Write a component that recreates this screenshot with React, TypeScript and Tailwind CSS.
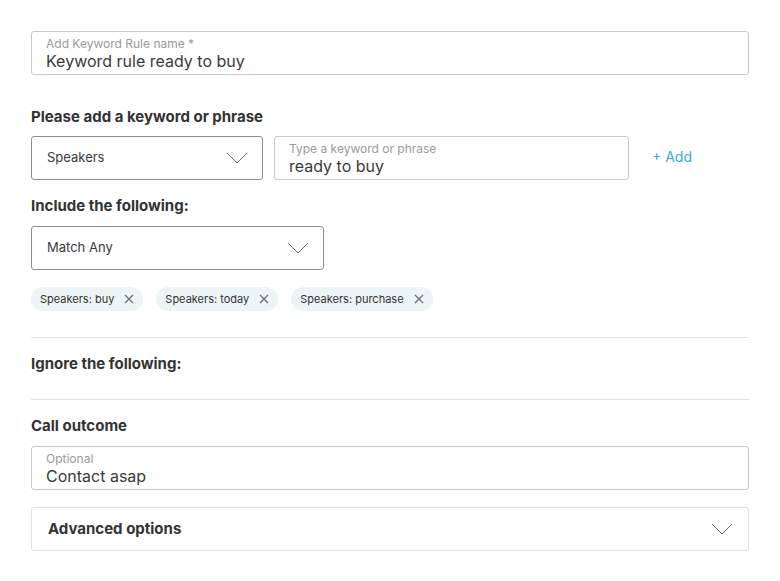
import React from "react";

const Chevron = ({ className = "" }: { className?: string }) => (
  <svg width="22" height="12" viewBox="0 0 22 12" className={className} fill="none">
    <path d="M1 1 L11 11 L21 1" stroke="#6b6b6b" strokeWidth="1" />
  </svg>
);

const XIcon = () => (
  <svg width="10" height="10" viewBox="0 0 10 10" fill="none">
    <path d="M1 1 L9 9 M9 1 L1 9" stroke="#6f6f6f" strokeWidth="1.3" />
  </svg>
);

const Field = ({ label, value, className = "" }: { label: string; value: string; className?: string }) => (
  <div className={`h-[44px] border border-[#c9c9c9] rounded-[3px] px-[14px] pt-[5px] flex flex-col ${className}`}>
    <span className="text-[12px] leading-[14px] text-[#9a9a9a]">{label}</span>
    <span className="text-[16px] leading-[20px] text-[#3a3a3a]">{value}</span>
  </div>
);

const Select = ({ value, className = "" }: { value: string; className?: string }) => (
  <div className={`h-[44px] border border-[#8e8e8e] rounded-[3px] pl-[15px] pr-[14px] flex items-center justify-between ${className}`}>
    <span className="text-[13px] text-[#3a3a3a]">{value}</span>
    <Chevron />
  </div>
);

const Chip = ({ text }: { text: string }) => (
  <div className="h-[24px] rounded-full bg-[#edf4f6] pl-[9px] pr-[9px] flex items-center gap-[10px]">
    <span className="text-[11px] text-[#333]">{text}</span>
    <XIcon />
  </div>
);

export default function App() {
  return (
    <div className="w-[780px] h-[581px] bg-white px-[31px] pt-[31px] text-[#333]" style={{ fontFamily: "Inter, 'Noto Sans', sans-serif" }}>
      <Field label="Add Keyword Rule name *" value="Keyword rule ready to buy" />
      <h3 className="mt-[32px] text-[15px] font-bold leading-[20px] text-[#333]">Please add a keyword or phrase</h3>
      <div className="mt-[9px] flex items-center">
        <Select value="Speakers" className="w-[232px]" />
        <Field label="Type a keyword or phrase" value="ready to buy" className="w-[355px] ml-[11px]" />
        <span className="ml-[23px] text-[14px] text-[#3aa9e1] -mt-[4px]">+ Add</span>
      </div>
      <h3 className="mt-[16px] text-[15px] font-bold leading-[20px]">Include the following:</h3>
      <Select value="Match Any" className="mt-[10px] w-[293px]" />
      <div className="mt-[17px] flex gap-[13px]">
        <Chip text="Speakers: buy" />
        <Chip text="Speakers: today" />
        <Chip text="Speakers: purchase" />
      </div>
      <div className="mt-[26px] border-t border-[#e3e3e3]" />
      <h3 className="mt-[16px] text-[15px] font-bold leading-[20px]">Ignore the following:</h3>
      <div className="mt-[25px] border-t border-[#e3e3e3]" />
      <h3 className="mt-[16px] text-[15px] font-bold leading-[20px]">Call outcome</h3>
      <Field label="Optional" value="Contact asap" className="mt-[10px]" />
      <div className="mt-[17px] h-[44px] border border-[#e0e0e0] rounded-[3px] pl-[16px] pr-[15px] flex items-center justify-between">
        <span className="text-[15px] font-bold">Advanced options</span>
        <Chevron />
      </div>
    </div>
  );
}
